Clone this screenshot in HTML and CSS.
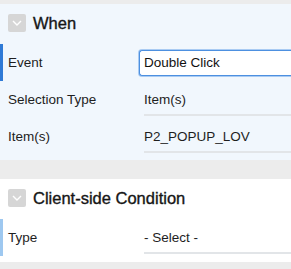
FILE: index.html
```html
<!DOCTYPE html>
<html>
<head>
<meta charset="utf-8">
<link rel="stylesheet" href="styles.css">
</head>
<body>
<section class="panel panel-blue">
  <div class="panel-head">
    <span class="toggle"><svg width="10" height="6" viewBox="0 0 10 6"><path d="M1 1 L5 5 L9 1" fill="none" stroke="#fff" stroke-width="1.4"/></svg></span>
    <h2 class="title">When</h2>
  </div>
  <div class="row row-active">
    <span class="label">Event</span>
    <span class="input">Double Click</span>
  </div>
  <div class="row">
    <span class="label">Selection Type</span>
    <span class="value">Item(s)</span>
  </div>
  <div class="row">
    <span class="label">Item(s)</span>
    <span class="value">P2_POPUP_LOV</span>
  </div>
</section>
<section class="panel panel-white">
  <div class="panel-head">
    <span class="toggle"><svg width="10" height="6" viewBox="0 0 10 6"><path d="M1 1 L5 5 L9 1" fill="none" stroke="#fff" stroke-width="1.4"/></svg></span>
    <h2 class="title">Client-side Condition</h2>
  </div>
  <div class="row row-light">
    <span class="label">Type</span>
    <span class="value">- Select -</span>
  </div>
</section>
</body>
</html>
```
FILE: styles.css
```css
html, body {
  margin: 0;
  padding: 0;
}
body {
  background: #ececec;
  font-family: "Liberation Sans", Arial, sans-serif;
  color: #1a1a1a;
  padding-top: 4px;
  width: 291px;
  height: 269px;
  overflow: hidden;
}
.panel {
  display: flex;
  flex-direction: column;
}
.panel-blue {
  background: #f1f7fd;
  padding-bottom: 5px;
  margin-bottom: 19px;
}
.panel-white {
  background: #ffffff;
  padding-bottom: 6px;
}
.panel-head {
  display: flex;
  align-items: center;
  gap: 7px;
  height: 40px;
  padding: 0 8px 2px;
  box-sizing: border-box;
}
.toggle {
  width: 18px;
  height: 18px;
  border-radius: 2px;
  background: #d6d6d6;
  display: flex;
  align-items: center;
  justify-content: center;
}
.title {
  margin: 0;
  font-size: 16.5px;
  font-weight: normal;
  -webkit-text-stroke: 0.35px #161616;
  color: #161616;
}
.row {
  display: grid;
  grid-template-columns: 131px 1fr;
  align-items: center;
  height: 37px;
  padding-left: 8px;
  font-size: 13.5px;
}
.row-active {
  box-shadow: inset 3px 0 0 #2f7ad6;
}
.row-light {
  box-shadow: inset 3px 0 0 #9ec8f0;
}
.label {
  color: #1e1e1e;
}
.input {
  height: 24px;
  line-height: 24px;
  border: 1px solid #4d90e0;
  border-right: none;
  border-radius: 3px 0 0 3px;
  box-shadow: 0 0 0 1px #a9cbf3;
  background: #fff;
  padding-left: 4px;
  color: #111;
}
.value {
  margin: 8px 0 0 5px;
  padding: 0 0 6px 0;
  border-bottom: 2px solid #e2e5e8;
  line-height: 16px;
  color: #1e1e1e;
}
```
